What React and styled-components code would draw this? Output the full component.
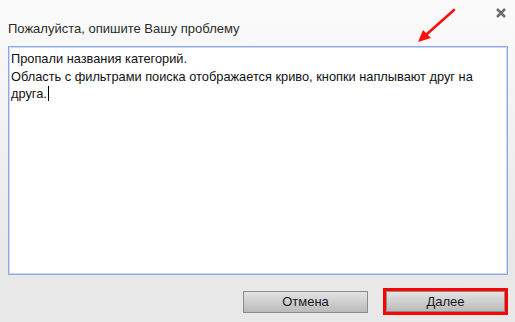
import React from 'react';
import styled, { createGlobalStyle } from 'styled-components';

const GlobalStyle = createGlobalStyle`
  html, body {
    margin: 0;
    padding: 0;
  }
  body {
    font-family: "Liberation Sans", Arial, sans-serif;
  }
`;

const Dialog = styled.div`
  position: relative;
  width: 515px;
  height: 322px;
  box-sizing: border-box;
  padding: 0 7px 0 8px;
  display: flex;
  flex-direction: column;
  background: linear-gradient(to bottom, #fbfbfb 0%, #f4f4f4 30%, #e8e8e8 80%, #e8e8e8 100%);
`;

const Header = styled.div`
  height: 46px;
  box-sizing: border-box;
  padding-top: 21px;
`;

const Title = styled.div`
  font-size: 13px;
  line-height: 15px;
  color: #2b2b2b;
`;

const Close = styled.button`
  position: absolute;
  top: 8px;
  right: 9px;
  width: 10px;
  height: 10px;
  padding: 0;
  border: 0;
  background: transparent;
  cursor: pointer;
  display: flex;
  align-items: center;
  justify-content: center;
`;

const Arrow = styled.svg`
  position: absolute;
  left: 410px;
  top: 4px;
  width: 50px;
  height: 44px;
  pointer-events: none;
`;

const Field = styled.div`
  width: 500px;
  height: 229px;
  box-sizing: border-box;
  border: 1px solid #8fa9e6;
  box-shadow: inset 0 0 0 1px #c9d6f6;
  background: #fff;
  padding: 3px 2px;
  font-size: 12.8px;
  line-height: 17.5px;
  color: #111;
  white-space: pre-wrap;
`;

const Caret = styled.span`
  display: inline-block;
  width: 1px;
  height: 15px;
  margin-left: 1px;
  vertical-align: -3px;
  background: #000;
`;

const Footer = styled.div`
  margin-top: 13px;
  display: flex;
  justify-content: flex-end;
  align-items: center;
  gap: 15px;
`;

const Button = styled.button`
  width: ${p => p.$w || 125}px;
  height: ${p => p.$h || 22}px;
  box-sizing: border-box;
  border: 1px solid #8c8c8c;
  background: linear-gradient(to bottom, #e2e2e2 0%, #cfcfcf 50%, #bababa 100%);
  font-family: "Liberation Sans", Arial, sans-serif;
  font-size: 13px;
  color: #1a1a1a;
  padding: 0;
  cursor: pointer;
`;

const Highlight = styled.div`
  border: 3px solid #ff0000;
  display: flex;
`;

export default function App() {
  return (
    <>
      <GlobalStyle />
      <Dialog>
        <Header>
          <Title>Пожалуйста, опишите Вашу проблему</Title>
        </Header>
        <Close aria-label="close">
          <svg width="10" height="10" viewBox="0 0 10 10">
            <path d="M1 1 L9 9 M9 1 L1 9" stroke="#6e6e6e" strokeWidth="2.5" />
          </svg>
        </Close>
        <Arrow viewBox="410 4 50 44">
          <line x1="454" y1="10" x2="427" y2="34" stroke="#ff1010" strokeWidth="2.6" strokeLinecap="round" />
          <polygon points="418,42 431,38 423,30" fill="#ff1010" />
        </Arrow>
        <Field>
          {'Пропали названия категорий.\nОбласть с фильтрами поиска отображается криво, кнопки наплывают друг на друга.'}
          <Caret />
        </Field>
        <Footer>
          <Button>Отмена</Button>
          <Highlight>
            <Button $w={119} $h={21}>Далее</Button>
          </Highlight>
        </Footer>
      </Dialog>
    </>
  );
}
